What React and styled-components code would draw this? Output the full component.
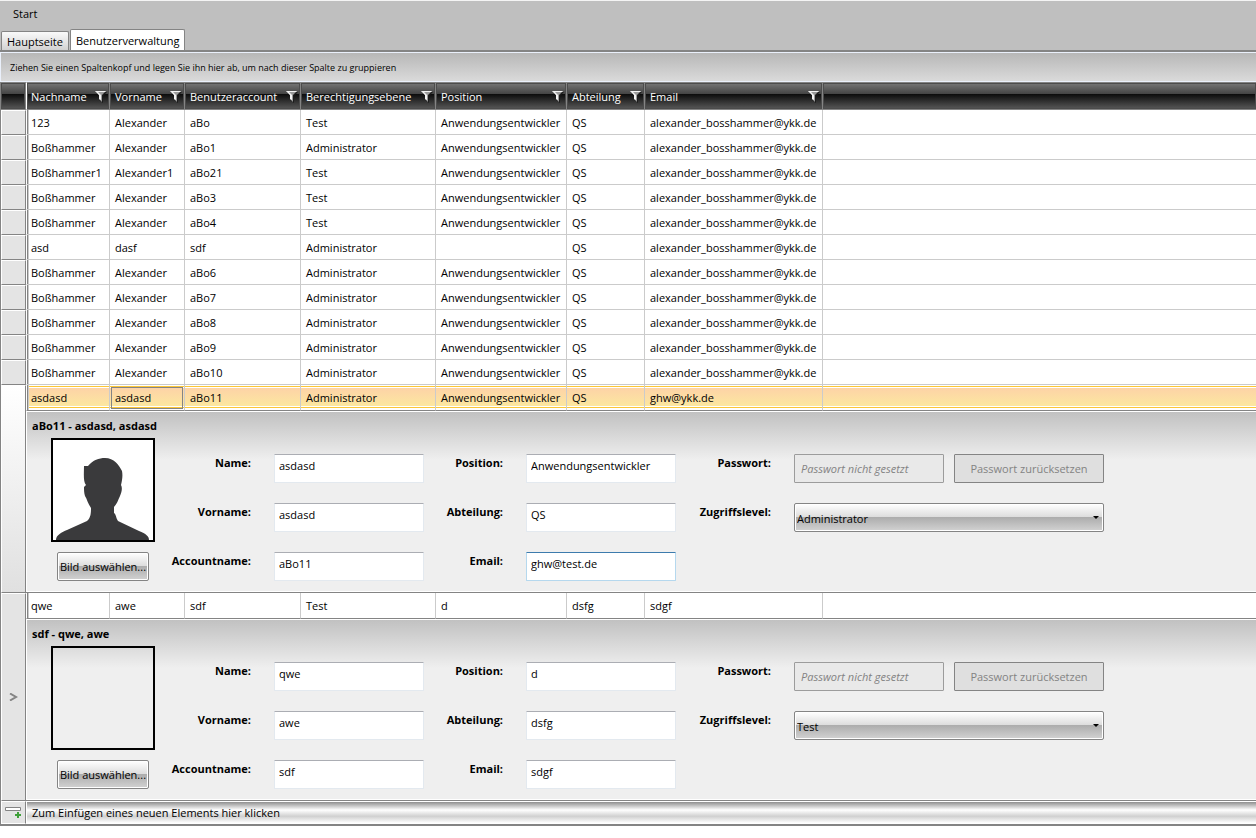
import React, { useState } from 'react';
import styled, { createGlobalStyle } from 'styled-components';

const columns = [
  { key: 'nachname', label: 'Nachname', width: 84 },
  { key: 'vorname', label: 'Vorname', width: 75 },
  { key: 'account', label: 'Benutzeraccount', width: 116 },
  { key: 'ebene', label: 'Berechtigungsebene', width: 135 },
  { key: 'position', label: 'Position', width: 131 },
  { key: 'abteilung', label: 'Abteilung', width: 78 },
  { key: 'email', label: 'Email', width: 178 },
];

const MAIL = 'alexander_bosshammer@ykk.de';
const DEV = 'Anwendungsentwickler';

const toUser = ([nachname, vorname, account, ebene, position, abteilung, email]) => (
  { nachname, vorname, account, ebene, position, abteilung, email }
);

const users = [
  ['123', 'Alexander', 'aBo', 'Test', DEV, 'QS', MAIL],
  ['Boßhammer', 'Alexander', 'aBo1', 'Administrator', DEV, 'QS', MAIL],
  ['Boßhammer1', 'Alexander1', 'aBo21', 'Test', DEV, 'QS', MAIL],
  ['Boßhammer', 'Alexander', 'aBo3', 'Test', DEV, 'QS', MAIL],
  ['Boßhammer', 'Alexander', 'aBo4', 'Test', DEV, 'QS', MAIL],
  ['asd', 'dasf', 'sdf', 'Administrator', '', 'QS', MAIL],
  ['Boßhammer', 'Alexander', 'aBo6', 'Administrator', DEV, 'QS', MAIL],
  ['Boßhammer', 'Alexander', 'aBo7', 'Administrator', DEV, 'QS', MAIL],
  ['Boßhammer', 'Alexander', 'aBo8', 'Administrator', DEV, 'QS', MAIL],
  ['Boßhammer', 'Alexander', 'aBo9', 'Administrator', DEV, 'QS', MAIL],
  ['Boßhammer', 'Alexander', 'aBo10', 'Administrator', DEV, 'QS', MAIL],
].map(toUser);

const selectedUser = toUser(['asdasd', 'asdasd', 'aBo11', 'Administrator', DEV, 'QS', 'ghw@ykk.de']);
const currentUser = toUser(['qwe', 'awe', 'sdf', 'Test', 'd', 'dsfg', 'sdgf']);

const FilterIcon = () => (
  <svg width="12" height="12" viewBox="0 0 12 12" aria-hidden="true">
    <path d="M1 1H12L8 5V12L4 9V5Z" fill="#1c1c1c" />
    <path d="M0 0H11L7 4V11L4 8V4Z" fill="#9a9a9a" />
    <path d="M0 0H11L10 1H3L6 4V9L4 8V4Z" fill="#f2f2f2" />
  </svg>
);

const AddRowIcon = () => (
  <svg width="17" height="12" viewBox="0 0 17 12" aria-hidden="true">
    <path d="M0.5 0.5H15.5V3.5H0.5Z" fill="#fff" stroke="#848484" />
    <path d="M12 5H14V7H16V9H14V11H12V9H10V7H12Z" fill="#3fa03a" />
  </svg>
);

const Silhouette = () => (
  <svg width="100" height="100" viewBox="0 0 100 100" aria-hidden="true">
    <path
      d="M3 100C3 95 9 92 14 90L34 81C38 78 38 72 38 68C35 64 34 59 32 56C31 53 31 50 31 47L33 45C30 42 31 33 31 26L35 26C40 20 46 18 52 18C61 18 66 25 69 31C70 36 69 41 68 45C70 49 68 53 67 56C65 60 64 64 61 67V73C63 74 63 78 65 81L86 91C93 94 96 96 96 100Z"
      fill="#3a3a3c"
    />
  </svg>
);

const Chevron = () => (
  <svg width="9" height="8" viewBox="0 0 9 8" aria-hidden="true">
    <path d="M1 0.5L7 4L1 7.5" fill="none" stroke="#848484" strokeWidth="2" />
  </svg>
);

const UserRow = ({ user, selected, head, last }) => (
  <Row $selected={selected} $last={last}>
    {head}
    {columns.map((c) => (
      <Cell key={c.key} $first={c.key === 'nachname'}>
        {selected && c.key === 'vorname' ? <FocusBox>{user[c.key]}</FocusBox> : user[c.key]}
      </Cell>
    ))}
    <Cell $filler />
  </Row>
);

const Field = ({ id, label, children }) => (
  <>
    <Label htmlFor={id}>{label}</Label>
    {children}
  </>
);

const Details = ({ user, prefix, email, photo, focusEmail }) => {
  const [form, setForm] = useState({ ...user, email });
  const bind = (key) => ({
    id: `${prefix}-${key}`,
    value: form[key],
    onChange: (e) => setForm({ ...form, [key]: e.target.value }),
  });

  return (
    <DetailsPanel>
      <DetailsTitle>{`${user.account} - ${user.nachname}, ${user.vorname}`}</DetailsTitle>
      <DetailsBody>
        <PhotoColumn>
          <Photo $filled={photo}>{photo && <Silhouette />}</Photo>
          <GlossButton type="button">Bild auswählen...</GlossButton>
        </PhotoColumn>
        <Form onSubmit={(e) => e.preventDefault()}>
          <Field id={`${prefix}-nachname`} label="Name:">
            <TextBox {...bind('nachname')} />
          </Field>
          <Field id={`${prefix}-position`} label="Position:">
            <TextBox {...bind('position')} />
          </Field>
          <Field id={`${prefix}-passwort`} label="Passwort:">
            <PasswordGroup>
              <PasswordBox id={`${prefix}-passwort`} placeholder="Passwort nicht gesetzt" disabled />
              <ResetButton type="button" disabled>Passwort zurücksetzen</ResetButton>
            </PasswordGroup>
          </Field>
          <Field id={`${prefix}-vorname`} label="Vorname:">
            <TextBox {...bind('vorname')} />
          </Field>
          <Field id={`${prefix}-abteilung`} label="Abteilung:">
            <TextBox {...bind('abteilung')} />
          </Field>
          <Field id={`${prefix}-ebene`} label="Zugriffslevel:">
            <SelectWrap>
              <Select {...bind('ebene')}>
                <option>Administrator</option>
                <option>Test</option>
              </Select>
              <Arrow />
            </SelectWrap>
          </Field>
          <Field id={`${prefix}-account`} label="Accountname:">
            <TextBox {...bind('account')} />
          </Field>
          <Field id={`${prefix}-email`} label="Email:">
            <TextBox {...bind('email')} $active={focusEmail} />
          </Field>
        </Form>
      </DetailsBody>
    </DetailsPanel>
  );
};

const App = () => {
  const [tab, setTab] = useState('Benutzerverwaltung');

  return (
    <>
      <GlobalStyle />
      <TopBar>
        <MenuButton type="button">Start</MenuButton>
        <Tabs role="tablist">
          {['Hauptseite', 'Benutzerverwaltung'].map((name) => (
            <Tab
              key={name}
              type="button"
              role="tab"
              aria-selected={tab === name}
              $active={tab === name}
              onClick={() => setTab(name)}
            >
              {name}
            </Tab>
          ))}
        </Tabs>
      </TopBar>
      <GroupPanel>Ziehen Sie einen Spaltenkopf und legen Sie ihn hier ab, um nach dieser Spalte zu gruppieren</GroupPanel>
      <Grid>
        <colgroup>
          <col style={{ width: 25 }} />
          {columns.map((c) => <col key={c.key} style={{ width: c.width }} />)}
          <col />
        </colgroup>
        <thead>
          <tr>
            <HeaderCell />
            {columns.map((c) => (
              <HeaderCell key={c.key} scope="col" $first={c.key === 'nachname'}>
                <HeaderContent>
                  {c.label}
                  <FilterButton type="button" aria-label={`${c.label} filtern`}>
                    <FilterIcon />
                  </FilterButton>
                </HeaderContent>
              </HeaderCell>
            ))}
            <HeaderCell $filler />
          </tr>
        </thead>
        <tbody>
          {users.map((u) => <UserRow key={u.account} user={u} head={<RowHead />} />)}
          <UserRow user={selectedUser} selected last head={<RowHead rowSpan={2} $tall />} />
          <tr>
            <DetailsCell colSpan={8}>
              <Details user={selectedUser} prefix="a" email="ghw@test.de" photo focusEmail />
            </DetailsCell>
          </tr>
          <UserRow user={currentUser} last head={<RowHead rowSpan={2}><Chevron /></RowHead>} />
          <tr>
            <DetailsCell colSpan={8}>
              <Details user={currentUser} prefix="b" email="sdgf" />
            </DetailsCell>
          </tr>
        </tbody>
        <tfoot>
          <tr>
            <RowHead $foot><AddRowIcon /></RowHead>
            <NewRowCell colSpan={8}>
              <NewRowButton type="button">Zum Einfügen eines neuen Elements hier klicken</NewRowButton>
            </NewRowCell>
          </tr>
        </tfoot>
      </Grid>
    </>
  );
};

export default App;

const GlobalStyle = createGlobalStyle`
  * {
    box-sizing: border-box;
  }
  body {
    margin: 0;
    background: #fff;
    color: #000;
    font: 11px/16px "Open Sans", "Noto Sans", sans-serif;
  }
  button, input, select {
    font: inherit;
    color: inherit;
  }
`;

const TopBar = styled.header`
  display: flex;
  flex-direction: column;
  align-items: flex-start;
  gap: 8px;
  padding-top: 5px;
  background: #bfbfbf;
  border-top: 1px solid #f4f4f4;
  border-bottom: 2px solid #848484;
`;

const MenuButton = styled.button`
  height: 15px;
  margin-left: 13px;
  padding: 0;
  border: 0;
  background: none;
  line-height: 15px;
`;

const Tabs = styled.div`
  display: flex;
  align-items: flex-end;
  gap: 1px;
  padding-left: 1px;
`;

const Tab = styled.button`
  height: ${(p) => (p.$active ? 21 : 19)}px;
  padding: 1px 5px 0;
  border: 1px solid #848484;
  border-bottom: 0;
  border-radius: 2px 2px 0 0;
  background: ${(p) => (p.$active ? '#fff' : 'linear-gradient(#fafafa, #d2d2d2)')};
`;

const GroupPanel = styled.div`
  height: 30px;
  padding: 0 9px;
  border: 1px solid #eaf0fb;
  border-right: 0;
  background: linear-gradient(#b7b7b7, #dadada);
  font-size: 9px;
  line-height: 30px;
`;

const Grid = styled.table`
  width: 100%;
  table-layout: fixed;
  border-collapse: separate;
  border-spacing: 0;
  border-left: 1px solid #848484;
  border-bottom: 2px solid #848484;
  box-shadow: 0 1px #eee;
`;

const HeaderCell = styled.th`
  height: 28px;
  padding: 1px 2px 0 5px;
  border: solid #848484;
  border-width: 1px ${(p) => (p.$filler ? 0 : 1)}px 1px 0;
  ${(p) => p.$first && 'border-left: 1px solid #fff; padding-left: 4px;'}
  background: linear-gradient(#767676, #444 42%, #0c0c0c 43%, #585858);
  box-shadow: inset 0 0 0 1px #4c4c4c;
  color: #fff;
  font-weight: 400;
  text-align: left;
`;

const HeaderContent = styled.div`
  display: flex;
  align-items: center;
  justify-content: space-between;
  white-space: nowrap;
`;

const FilterButton = styled.button`
  display: flex;
  padding: 0;
  border: 0;
  background: none;
`;

const RowHead = styled.td`
  padding: 0;
  border: 1px solid #fff;
  border-right-color: #848484;
  border-bottom-color: ${(p) => (p.$foot ? '#fff' : '#848484')};
  background: ${(p) => (p.$tall ? 'linear-gradient(#fff, #e0e0e0)' : '#e4e4e4')};
  text-align: center;
  vertical-align: middle;

  svg {
    display: block;
    margin: 0 auto;
  }
`;

const Cell = styled.td`
  padding: 2px 0 0 5px;
  border-right: ${(p) => (p.$filler ? 0 : 1)}px solid #cbcbcb;
  border-bottom: 1px solid #cbcbcb;
  ${(p) => p.$first && 'border-left: 1px solid #fff; padding-left: 4px; box-shadow: inset 1px 0 #848484, inset 2px 0 #cbcbcb;'}
  white-space: nowrap;
`;

const Row = styled.tr`
  & > ${Cell} {
    height: ${(p) => (p.$last ? 26 : 25)}px;
    ${(p) => p.$last && 'padding-top: 1px; border-bottom-color: #848484;'}
    ${(p) => p.$selected && 'background: linear-gradient(#fff 1px, #fcc736 1px 2px, #fff 2px 3px, #fdd3a7 3px, #fce79f 21px, #fff 21px 22px, #fcc736 22px 23px, #fff 23px);'}
  }
`;

const FocusBox = styled.div`
  height: 22px;
  margin: 0 1px 0 -4px;
  padding-left: 3px;
  border: 1px solid #848484;
  line-height: 20px;
`;

const DetailsCell = styled.td`
  padding: 0;
  border-bottom: 1px solid #848484;
`;

const DetailsPanel = styled.section`
  height: 181px;
  border: 1px solid #fff;
  border-right: 0;
  background: linear-gradient(#c1c1c1, #efefef 48px);
`;

const DetailsTitle = styled.h2`
  margin: 0;
  padding: 6px 5px 4px;
  font-size: 11px;
  line-height: 16px;
`;

const DetailsBody = styled.div`
  display: flex;
  padding-left: 24px;
`;

const PhotoColumn = styled.div`
  display: flex;
  flex-direction: column;
  align-items: center;
  gap: 10px;
`;

const Photo = styled.div`
  width: 104px;
  height: 104px;
  border: 2px solid #000;
  background: ${(p) => (p.$filled ? '#fff' : 'none')};
`;

const GlossButton = styled.button`
  width: 92px;
  height: 29px;
  padding: 0;
  border: 1px solid #848484;
  border-radius: 2px;
  box-shadow: inset 0 0 0 1px #fff;
  background: linear-gradient(#fff, #dcdcdc 49%, #adadad 50%, #d2d2d2);
  white-space: nowrap;
`;

const Form = styled.form`
  display: grid;
  grid-template-columns: 119px 150px 102px 150px 118px 310px;
  grid-auto-rows: 29px;
  row-gap: 20px;
  padding-top: 16px;
`;

const Label = styled.label`
  padding: 1px 23px 0 0;
  font-weight: 700;
  text-align: right;
  white-space: nowrap;
`;

const TextBox = styled.input`
  width: 100%;
  height: 29px;
  padding: 0 4px 6px;
  border: 1px solid ${(p) => (p.$active ? '#b5d8ee' : '#e3e9ef')};
  border-top-color: ${(p) => (p.$active ? '#3d7bad' : '#abadb3')};
  border-radius: 1px;
  background: #fff;
  outline: none;
`;

const PasswordGroup = styled.div`
  display: grid;
  grid-template-columns: 1fr 1fr;
  gap: 10px;
`;

const PasswordBox = styled.input`
  width: 100%;
  height: 29px;
  padding: 0 6px;
  border: 1px solid #9c9c9c;
  border-radius: 1px;
  background: #e9e9e9;
  font-style: italic;

  &::placeholder {
    color: #838383;
  }
`;

const ResetButton = styled.button`
  height: 29px;
  padding: 1px 0 0;
  border: 1px solid #848484;
  border-radius: 1px;
  background: #dfdfdf;
  color: #838383;
  white-space: nowrap;
`;

const SelectWrap = styled.div`
  position: relative;
`;

const Select = styled.select`
  appearance: none;
  width: 100%;
  height: 29px;
  padding: 2px 2px 0;
  border: 1px solid #848484;
  border-radius: 2px;
  box-shadow: inset 0 0 0 1px #fff;
  background: linear-gradient(#fff, #dcdcdc 49%, #adadad 50%, #d2d2d2);
`;

const Arrow = styled.span`
  position: absolute;
  top: 13px;
  right: 5px;
  border: solid transparent;
  border-width: 3px 3px 0;
  border-top-color: #000;
  pointer-events: none;
`;

const NewRowCell = styled.td`
  padding: 0;
  border: 1px solid #fff;
  border-right: 0;
`;

const NewRowButton = styled.button`
  display: block;
  width: 100%;
  height: 21px;
  padding: 0 5px;
  border: 0;
  background: linear-gradient(#8f8f8f, #fff 38%, #d0d0d0 68%, #fff);
  text-align: left;
`;
